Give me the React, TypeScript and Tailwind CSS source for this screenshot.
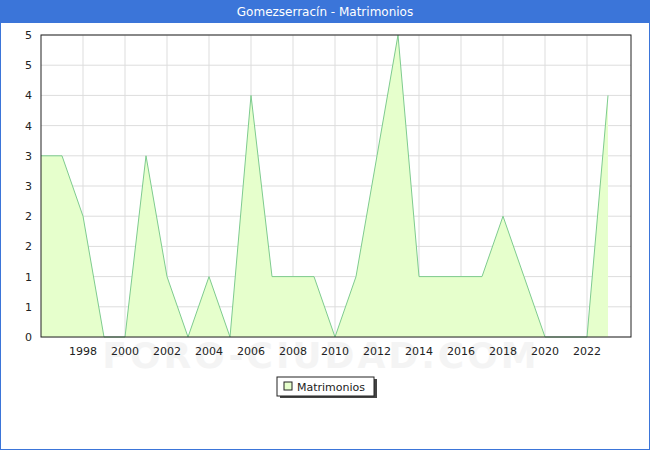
const vals = [3, 3, 2, 0, 0, 3, 1, 0, 1, 0, 4, 1, 1, 1, 0, 1, 3, 5, 1, 1, 1, 1, 2, 1, 0, 0, 0, 4]
const X0 = 40, Y0 = 337, DX = 21, DY = 60.4
const px = (i: number) => X0 + i * DX
const py = (v: number) => Y0 - v * DY
const yLabels = ['0', '1', '1', '2', '2', '3', '3', '4', '4', '5', '5']

export default function App() {
  const line = vals.map((v, i) => `${px(i)},${py(v)}`).join(' ')
  const area = `${X0},${Y0} ${line} ${px(vals.length - 1)},${Y0}`
  return (
    <div className="w-[650px] h-[450px] border border-[#3b75d9] bg-white flex flex-col" style={{ fontFamily: '"DejaVu Sans", sans-serif' }}>
      <div className="h-[22px] bg-[#3b75d9] text-white text-[12px] flex items-center justify-center">Gomezserracín - Matrimonios</div>
      <div className="relative flex-1">
        <svg width="648" height="426" className="absolute left-0 top-[-23px]" style={{ fontFamily: '"DejaVu Sans", sans-serif' }}>
          <rect x={X0} y={35} width={590} height={302} fill="white" />
          {Array.from({ length: 11 }).map((_, k) => (
            <line key={k} x1={X0} x2={630} y1={Y0 - k * 30.2} y2={Y0 - k * 30.2} stroke="#ddd" />
          ))}
          {Array.from({ length: 13 }).map((_, k) => (
            <line key={k} x1={82 + k * 42} x2={82 + k * 42} y1={35} y2={337} stroke="#ddd" />
          ))}
          <text x={320} y={368} fontSize={36} fill="#f4f4f4" textAnchor="middle" fontWeight="bold" letterSpacing="3">FORO-CIUDAD.COM</text>
          <polygon points={area} fill="#e6ffcc" />
          <polyline points={line} fill="none" stroke="#7ecb8f" strokeWidth={1} />
          <rect x={X0} y={35} width={590} height={302} fill="none" stroke="#222" strokeWidth={1} />
          {yLabels.map((l, k) => (
            <text key={k} x={31} y={Y0 - k * 30.2 + 4} fontSize={11} textAnchor="end" fill="#222">{l}</text>
          ))}
          {Array.from({ length: 13 }).map((_, k) => (
            <text key={k} x={82 + k * 42} y={355} fontSize={11} textAnchor="middle" fill="#222">{1998 + k * 2}</text>
          ))}
          <rect x={279} y={379} width={97} height={19} fill="#444" />
          <rect x={276} y={377} width={97} height={19} fill="white" stroke="#222" />
          <rect x={283} y={382} width={8} height={8} fill="#e6ffcc" stroke="#222" />
          <text x={296} y={391} fontSize={11} fill="#222">Matrimonios</text>
          <text x={640} y={437} fontSize={10} textAnchor="end" fill="#222">http://www.foro-ciudad.com</text>
        </svg>
      </div>
    </div>
  )
}
